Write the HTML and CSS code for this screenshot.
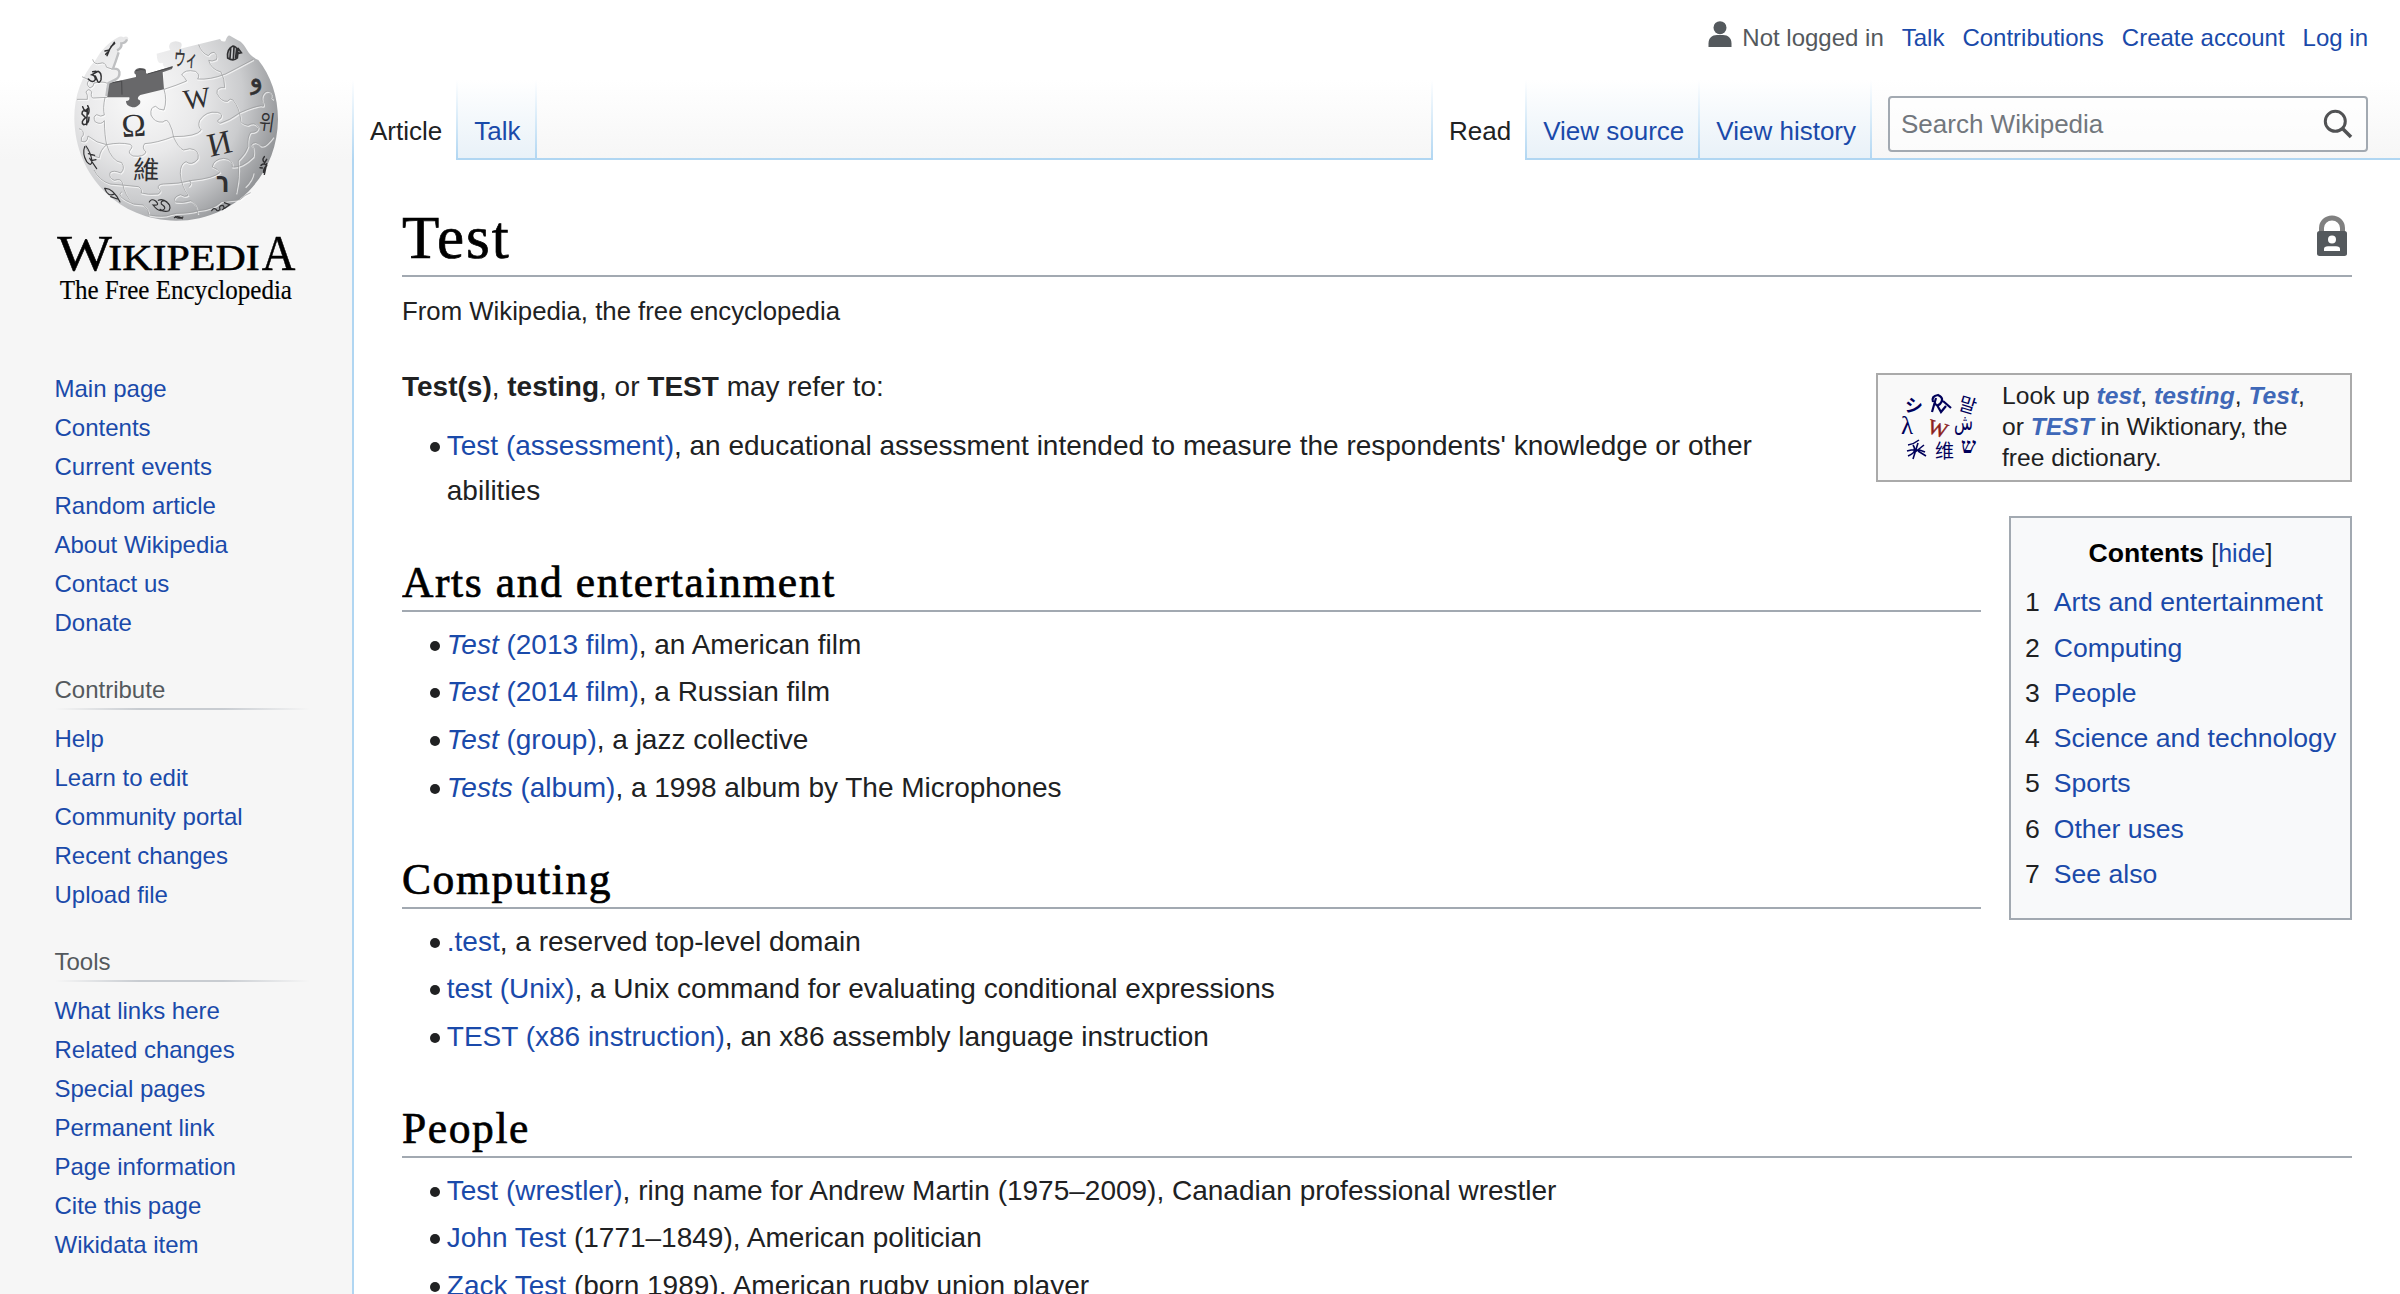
FILE: index.html
```html
<!DOCTYPE html>
<html lang="en">
<head>
<meta charset="utf-8">
<title>Test - Wikipedia</title>
<link rel="stylesheet" href="styles.css">
</head>
<body>
<div class="page">
<aside class="sidebar">
  <a class="logo">
    <svg viewBox="0 0 1056 990" width="352" height="330" role="img" aria-label="Wikipedia">
      <defs>
        <radialGradient id="ball" gradientUnits="userSpaceOnUse" cx="420" cy="290" r="440">
          <stop offset="0" stop-color="#fafafa"/><stop offset=".4" stop-color="#e9e9ea"/>
          <stop offset=".7" stop-color="#cbccce"/><stop offset="1" stop-color="#8f9194"/>
        </radialGradient>
      </defs>
      <path fill="url(#ball)" d="M223 358C222 290 245 225 287 180C302 152 325 128 352 113Q364 106 370 112Q382 106 385 115Q381 132 368 133Q370 145 355 150C362 166 348 180 343 204Q358 204 362 215Q366 232 351 240L325 250L322 292L492 268L490 210L516 202Q492 208 488 193Q493 187 482 190Q471 190 470 161L511 150Q503 139 512 128Q527 119 543 128Q548 136 541 146L660 117Q664 127 676 124Q682 104 690 107Q705 116 722 125Q731 132 741 150Q752 170 775 180C812 225 834 290 834 358C832 535 695 662 528 662C360 662 226 530 223 358Z"/>
      <path fill="#68686a" d="M325 250L408 231Q410 224 403 220Q401 208 418 204Q438 203 438 213Q436 220 442 222L518 198L516 207L488 217L492 268L421 285Q412 290 414 298Q424 301 420 311Q410 323 397 322Q377 317 378 303Q391 303 388 292L322 292Q317 265 325 250Z"/>
      <path fill="none" stroke="#48484a" stroke-width="3" d="M325 250L365 243L366 284M408 212Q424 206 436 210M442 222L518 201"/>
      <g fill="none" stroke="#fff" stroke-width="4" opacity=".65" transform="translate(2 3)">
        <path id="seams" d="M278 178Q282 195 300 190Q315 184 320 202L336 207M246 230L268 240Q255 253 270 264Q282 260 282 249Q310 243 322 250M231 298L262 298Q264 285 258 276Q266 262 275 276Q271 294 280 294L322 292M315 292Q308 326 313 345Q302 352 290 344Q277 350 286 366Q304 376 313 362Q314 410 320 434Q335 485 365 488Q377 506 362 519Q340 509 330 518Q326 535 343 541Q362 534 367 548Q375 590 400 612M237 386Q252 390 250 405Q242 411 244 424Q262 431 264 408Q290 430 320 434Q360 426 390 433Q401 439 391 449Q382 460 399 468Q432 472 438 456Q424 444 434 431Q470 429 520 410Q590 410 604 390Q592 380 599 361Q618 332 652 337Q671 342 662 355Q645 363 660 370Q690 361 720 338Q760 320 783 317Q794 322 790 310Q780 290 795 276Q810 269 814 284Q811 293 820 298M492 268Q502 300 492 330Q475 330 467 319Q450 321 453 345Q463 369 489 366Q501 355 508 370Q518 389 521 412Q535 443 550 450Q562 448 569 446Q600 449 594 477Q575 499 558 485Q540 492 541 521Q544 559 564 586Q555 593 541 584Q517 592 526 606Q550 610 572 602Q590 610 594 642M492 268Q530 256 560 243Q553 230 545 225Q554 207 586 214Q602 224 593 237Q630 240 676 222Q700 210 760 178M596 134Q605 160 625 167Q632 156 642 157Q655 166 649 179Q635 186 626 181Q633 208 663 216Q674 235 674 263Q649 260 651 280Q663 306 682 304Q691 293 699 300Q718 325 722 357Q720 372 744 376Q764 364 775 382Q774 398 752 397Q742 410 744 440Q738 460 715 482Q720 530 708 580M320 434Q300 450 298 473Q270 470 255 440M330 552Q370 555 415 560Q427 566 424 579Q443 585 474 582Q488 574 475 565Q472 553 490 552Q535 552 577 541Q640 535 660 517Q655 508 637 501Q640 478 671 475Q700 478 697 501Q725 504 760 470Q765 445 754 434Q766 420 781 437Q795 445 820 410M282 510Q298 542 330 552M365 575Q345 590 400 612L430 615Q447 628 447 645M447 645Q490 653 512 644L530 640Q570 640 594 632Q640 628 664 605L720 599Q735 584 752 578M568 541Q578 552 566 560M760 517Q757 540 735 560"/>
      </g>
      <use href="#seams" fill="none" stroke="#98999b" stroke-width="2.2"/>
      <path fill="none" stroke="#bfc0c2" stroke-width="7" d="M381 118Q377 129 364 130Q366 145 351 151M356 157Q347 185 339 206Q356 205 358 216Q360 232 346 239L325 249L319 288"/>
      <g class="globe-glyphs">
        <text x="364" y="409" font-size="98" transform="rotate(-4 400 375)">Ω</text>
        <text x="550" y="324" font-size="86" transform="rotate(-8 590 295)">W</text>
        <text x="622" y="464" font-size="100" transform="rotate(-13 657 430)">И</text>
        <text x="400" y="538" font-size="78" transform="rotate(2 440 510)">維</text>
        <text x="522" y="198" font-size="60" transform="rotate(4 555 175)" class="kana" textLength="70" lengthAdjust="spacingAndGlyphs">ウィ</text>
        <text x="648" y="577" font-size="86" class="heavy" textLength="40" lengthAdjust="spacingAndGlyphs">ר</text>
        <text x="768" y="262" font-size="80" transform="rotate(-12 768 250)" class="arabic" text-anchor="middle">و</text>
        <text x="778" y="391" font-size="65" transform="rotate(8 803 367)" textLength="46" lengthAdjust="spacingAndGlyphs">위</text>
      </g>
      <g fill="none" stroke="#303032" stroke-width="4.500" stroke-linecap="round">
        <path d="M321 167L328 150L315 153M328 149L343 127M333 140L344 130M317 163L323 157"/>
        <path d="M265 237Q278 251 286 239Q286 226 276 224L294 214Q306 218 303 239Q298 251 293 244L286 228M278 215L288 214"/>
        <path d="M248 320Q254 337 262 327L260 374M260 335Q246 327 246 342L257 353Q240 366 251 374Q267 374 267 352M263 317Q270 330 265 342"/>
        <path stroke-width="3.500" d="M254 440Q246 461 260 485Q274 502 276 483Q272 457 258 438M265 461L284 466M269 475L290 506M274 482L288 479"/>
        <path stroke-width="3.500" d="M314 565Q339 563 360 606M314 565Q324 592 343 582M332 590L352 597"/>
        <path stroke-width="3.500" d="M448 606Q454 594 467 603Q482 618 459 615Q477 638 489 630Q502 624 484 612Q481 602 494 602Q517 615 507 632Q493 638 480 628M475 601Q488 595 501 606"/>
        <path stroke-width="3.500" d="M635 632Q641 621 649 629Q652 636 660 628Q655 616 669 616Q676 625 667 629M673 608L689 614L674 625"/>
        <path stroke-width="3.500" d="M523 653Q534 645 547 656M526 650Q537 658 549 651"/>
        <path stroke-width="5" d="M683 174Q680 146 699 138Q719 142 712 174Q700 185 683 174ZM692 145L690 174M702 142L700 178M710 145L707 173M714 145L724 158L712 161"/>
        <path d="M793 470Q784 480 794 488L800 478M783 496Q793 488 800 497Q790 506 791 517M800 491L793 523M780 503L787 504"/>
      </g>
      <g class="wordmark">
        <text x="172" y="810" font-size="154" textLength="164" lengthAdjust="spacingAndGlyphs">W</text>
        <text x="325" y="810" font-size="110" textLength="454" lengthAdjust="spacingAndGlyphs">IKIPEDI</text>
        <text x="785" y="810" font-size="154" textLength="101" lengthAdjust="spacingAndGlyphs">A</text>
        <text class="tagline" x="179" y="898" font-size="79" textLength="697" lengthAdjust="spacingAndGlyphs">The Free Encyclopedia</text>
      </g>
    </svg>
  </a>
  <nav class="portal first">
    <ul><li><a>Main page</a></li><li><a>Contents</a></li><li><a>Current events</a></li><li><a>Random article</a></li><li><a>About Wikipedia</a></li><li><a>Contact us</a></li><li><a>Donate</a></li></ul>
  </nav>
  <nav class="portal">
    <h3>Contribute</h3>
    <ul><li><a>Help</a></li><li><a>Learn to edit</a></li><li><a>Community portal</a></li><li><a>Recent changes</a></li><li><a>Upload file</a></li></ul>
  </nav>
  <nav class="portal">
    <h3>Tools</h3>
    <ul><li><a>What links here</a></li><li><a>Related changes</a></li><li><a>Special pages</a></li><li><a>Permanent link</a></li><li><a>Page information</a></li><li><a>Cite this page</a></li><li><a>Wikidata item</a></li></ul>
  </nav>
</aside>
<div class="main">
  <header class="head">
    <div class="personal">
      <svg width="24" height="28" viewBox="0 0 24 28" fill="#54595d"><circle cx="12" cy="6.700" r="6.500"/><path d="M.5 26V22.500C.5 17 4 14 9 14H15C20 14 23.500 17 23.500 22.500V26Z"/></svg>
      <span class="anon">Not logged in</span><a>Talk</a><a>Contributions</a><a>Create account</a><a>Log in</a>
    </div>
    <div class="bar">
      <nav class="tabs"><a class="tab selected">Article</a><a class="tab">Talk</a></nav>
      <nav class="tabs views"><a class="tab selected">Read</a><a class="tab">View source</a><a class="tab">View history</a></nav>
      <div class="search"><span>Search Wikipedia</span>
        <svg width="30" height="30" viewBox="0 0 30 30" fill="none" stroke="#515254"><circle cx="12.300" cy="12.300" r="10" stroke-width="3"/><path d="M19 19L28 28" stroke-width="3.600"/></svg>
      </div>
    </div>
  </header>
  <main class="content">
    <div class="title-row">
      <h1>Test</h1>
      <svg class="lock" width="32" height="42" viewBox="0 0 32 42"><path d="M5.500 18V13A10.500 10 0 0 1 26.500 13V18" fill="none" stroke="#808080" stroke-width="5"/><rect x="1" y="16" width="30" height="25" rx="2.500" fill="#54595d"/><circle cx="16" cy="24.500" r="4" fill="#fff"/><path d="M8 36V34Q8 31.500 12 31.300H20Q24 31.500 24 34V36Z" fill="#fff"/></svg>
    </div>
    <div class="sub">From Wikipedia, the free encyclopedia</div>
    <div class="body">
      <div class="sister">
        <svg width="80" height="76" viewBox="0 0 80 76">
          <g class="sister-glyphs">
            <text x="6" y="26" font-size="18" transform="rotate(6 14 19)" class="bold">シ</text>
            <g fill="none" stroke="#00005a" stroke-width="2.200"><path d="M33 26L37 12M34 16Q32 10 39 9Q46 12 41 18Q37 21 36 17M38 19L42 26L47 20M44 15L52 22"/></g>
            <text x="60" y="26" font-size="19" transform="rotate(17 69 19)">말</text>
            <text x="2" y="48" font-size="25">λ</text>
            <text x="29" y="49" font-size="21" transform="rotate(18 37 42)" class="red">W</text>
            <text x="55" y="44" font-size="22" textLength="19" lengthAdjust="spacingAndGlyphs">ش</text>
            <g fill="none" stroke="#00005a" stroke-width="1.600"><path d="M20 54Q15 58 9 59M8 65Q18 62 26 66M19 57L14 73M19 65L27 70M14 59Q19 66 9 70M25 59L15 67"/></g>
            <text x="36" y="72" font-size="19">维</text>
            <text x="62" y="67" font-size="22" class="bold" textLength="15" lengthAdjust="spacingAndGlyphs">ש</text>
          </g>
        </svg>
        <div>Look up <a>test</a>, <a>testing</a>, <a>Test</a>,<br>or <a>TEST</a> in Wiktionary, the<br>free dictionary.</div>
      </div>
      <div class="toc">
        <div class="toc-title"><b>Contents</b> <span>[<a>hide</a>]</span></div>
        <ol><li><i>1</i><a>Arts and entertainment</a></li><li><i>2</i><a>Computing</a></li><li><i>3</i><a>People</a></li><li><i>4</i><a>Science and technology</a></li><li><i>5</i><a>Sports</a></li><li><i>6</i><a>Other uses</a></li><li><i>7</i><a>See also</a></li></ol>
      </div>
      <p><b>Test(s)</b>, <b>testing</b>, or <b>TEST</b> may refer to:</p>
      <ul>
        <li><a>Test (assessment)</a>, an educational assessment intended to measure the respondents' knowledge or other abilities</li>
      </ul>
      <h2>Arts and entertainment</h2>
      <ul>
        <li><a><em>Test</em> (2013 film)</a>, an American film</li>
        <li><a><em>Test</em> (2014 film)</a>, a Russian film</li>
        <li><a><em>Test</em> (group)</a>, a jazz collective</li>
        <li><a><em>Tests</em> (album)</a>, a 1998 album by The Microphones</li>
      </ul>
      <h2>Computing</h2>
      <ul>
        <li><a>.test</a>, a reserved top-level domain</li>
        <li><a>test (Unix)</a>, a Unix command for evaluating conditional expressions</li>
        <li><a>TEST (x86 instruction)</a>, an x86 assembly language instruction</li>
      </ul>
      <h2>People</h2>
      <ul>
        <li><a>Test (wrestler)</a>, ring name for Andrew Martin (1975–2009), Canadian professional wrestler</li>
        <li><a>John Test</a> (1771–1849), American politician</li>
        <li><a>Zack Test</a> (born 1989), American rugby union player</li>
      </ul>
    </div>
  </main>
</div>
</div>
</body>
</html>
```
FILE: styles.css
```css
* { box-sizing: border-box; }
body {
  margin: 0;
  font-family: "Liberation Sans", Arial, sans-serif;
  color: #202122;
  background: #f6f6f6;
}
a { color: #1a4aaa; text-decoration: none; }
ul, ol { list-style: none; margin: 0; padding: 0; }

.page {
  display: flex;
  width: 2400px;
  height: 1294px;
  overflow: hidden;
  background: linear-gradient(#fff 80px, #f6f6f6 160px);
}

/* Sidebar */
.sidebar { width: 352px; flex: none; font-size: 24px; }
.logo { display: block; height: 368.500px; }
.logo svg { display: block; }
.globe-glyphs { font-family: "Liberation Serif", "Noto Sans CJK TC", "DejaVu Sans", serif; fill: #303032; }
.globe-glyphs .heavy { font-family: "DejaVu Sans", sans-serif; font-weight: bold; }
.globe-glyphs .arabic { font-family: "DejaVu Sans", sans-serif; stroke: #303032; stroke-width: 2; }
.globe-glyphs .kana { stroke: #303032; stroke-width: 1; }
.wordmark { font-family: "Liberation Serif", serif; fill: #000; stroke: #000; stroke-width: 1.5; }
.wordmark .tagline { stroke-width: .5; }
.portal { padding: 0 42px 0 54.500px; margin-bottom: 34px; }
.portal li { padding: 6px 0; line-height: 27px; }
.portal h3 {
  margin: 0 0 9px;
  height: 34px;
  font-size: 24px;
  font-weight: normal;
  line-height: 28px;
  color: #54595d;
  background: linear-gradient(to right, rgba(200,204,209,0) 0, #c8ccd1 33%, #c8ccd1 66%, rgba(200,204,209,0) 100%) 0 100% / 100% 2px no-repeat;
}

/* Header */
.main { flex: 1; min-width: 0; }
.head { height: 160px; }
.personal {
  display: flex;
  justify-content: flex-end;
  gap: 18px;
  height: 80px;
  padding: 21px 32px 0 0;
  font-size: 24px;
  line-height: 34px;
}
.personal svg { margin-right: -7.500px; }
.anon { color: #54595d; }
.bar {
  display: flex;
  height: 80px;
  background: linear-gradient(#b0d6f2, #b0d6f2) 0 100% / 100% 2px no-repeat;
}
.tabs {
  display: flex;
  background: linear-gradient(#fff, #b0d6f2) 0 0 / 2px 100% no-repeat;
  padding-left: 2px;
}
.views { margin-left: auto; }
.tab {
  padding: 36px 16px 0 16px;
  font-size: 26px;
  line-height: 30px;
  background: linear-gradient(#fff, #b0d6f2) 100% 0 / 2px 100% no-repeat, linear-gradient(#b0d6f2, #b0d6f2) 0 100% / 100% 2px no-repeat, linear-gradient(#fff, #e8f1f8);
}
.tab.selected { color: #202122; background: linear-gradient(#fff, #b0d6f2) 100% 0 / 2px 100% no-repeat, #fff; }
.search {
  display: flex;
  justify-content: space-between;
  width: 480px;
  height: 56px;
  margin: 16px 32px 0 16px;
  padding: 11px 13px 0 11px;
  border: 2px solid #a2a9b1;
  border-radius: 4px;
  background: rgba(255,255,255,.5);
  color: #72777d;
  font-size: 26px;
  line-height: 30px;
}

/* Article */
.content {
  height: 1134px;
  padding: 40px 48px 0;
  border-left: 2px solid #b0d6f2;
  background: #fff;
}
.title-row { display: flex; justify-content: space-between; height: 77px; border-bottom: 2px solid #a2a9b1; }
h1, h2 { font-family: Georgia, "Liberation Serif", serif; font-weight: normal; color: #000; -webkit-text-stroke: .7px #000; }
h1 { margin: 0; font-size: 61px; line-height: 75px; letter-spacing: 2px; }
.lock { margin: 15px 4px 0 0; }
.sub { margin-top: 15.400px; height: 73px; font-size: 25.760px; line-height: 38.600px; }
.body { font-size: 28px; line-height: 44.800px; }
p { margin: 0 0 14px; }
.body h2 {
  overflow: hidden;
  height: 56.600px;
  margin: 41.500px 0 11px;
  font-size: 43.500px;
  line-height: 54.600px;
  letter-spacing: 1.600px;
  border-bottom: 2px solid #a2a9b1;
}
.body > ul { margin-left: 44.800px; }
.body > ul > li { margin-bottom: 2.800px; }
.body > ul > li::before {
  content: "";
  display: inline-block;
  width: 10px;
  height: 10px;
  margin: 0 7px 0 -17px;
  vertical-align: 3px;
  border-radius: 50%;
  background: #202122;
}
.sister {
  float: right;
  display: flex;
  gap: 22px;
  width: 476px;
  height: 109px;
  margin: 8px 0 14px 28px;
  padding: 6px 8px 0 22px;
  border: 2px solid #aaa;
  background: #f9f9f9;
  font-size: 24.640px;
  line-height: 30.800px;
}
.sister svg { flex: none; margin: 5px 1px 0 -1px; }
.sister a { color: #3f68b8; font-weight: bold; font-style: italic; }
.sister-glyphs { fill: #00005a; font-family: "Liberation Serif", "Noto Sans CJK SC", "Noto Sans CJK KR", "DejaVu Sans", serif; }
.sister-glyphs .bold { font-weight: bold; }
.sister-glyphs .red { fill: #8c1f1c; stroke: #8c1f1c; stroke-width: .5; }
.toc {
  float: right;
  clear: right;
  width: 343px;
  height: 404px;
  margin: 19.500px 0 28px 28px;
  padding: 14px;
  border: 2px solid #a2a9b1;
  background: #f8f9fa;
  font-size: 26.600px;
  line-height: 42.560px;
}
.toc-title { margin-bottom: 7px; text-align: center; }
.toc-title b { color: #000; }
.toc-title span { font-size: 25px; }
.toc li { display: flex; gap: 14px; margin-bottom: 2.660px; white-space: nowrap; }
.toc i { font-style: normal; }
```
